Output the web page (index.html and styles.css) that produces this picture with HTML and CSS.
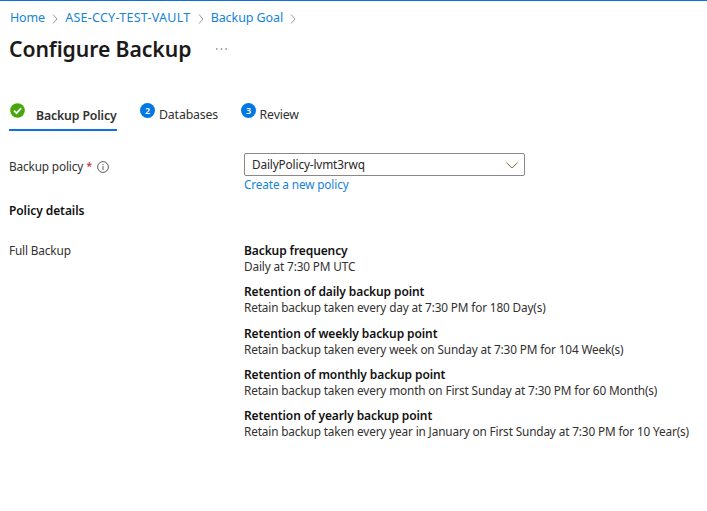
FILE: index.html
```html
<!DOCTYPE html>
<html lang="en">
<head>
<meta charset="utf-8">
<title>Configure Backup</title>
<link rel="stylesheet" href="styles.css">
</head>
<body>
<nav class="crumbs">
<a>Home</a><svg class="sep" viewBox="0 0 6 10"><path d="M1 .5 5 5 1 9.500"/></svg><a class="vault">ASE-CCY-TEST-VAULT</a><svg class="sep" viewBox="0 0 6 10"><path d="M1 .5 5 5 1 9.500"/></svg><a class="goal">Backup Goal</a><svg class="sep" viewBox="0 0 6 10"><path d="M1 .5 5 5 1 9.500"/></svg>
</nav>
<header class="heading"><h1>Configure Backup</h1><svg class="more" viewBox="0 0 11 2"><path d="M0 .5h1.500v1H0zM4.700 .5h1.500v1H4.700zM9.400 .5h1.500v1H9.400z"/></svg></header>
<div class="tabs">
<div class="tab active"><svg class="check" viewBox="0 0 15 15"><circle cx="7.500" cy="7.500" r="7.300"/><path d="m4 7.700 2.500 2.500 4.700-5"/></svg><span>Backup Policy</span></div>
<div class="tab databases"><i class="num">2</i><span>Databases</span></div>
<div class="tab review"><i class="num">3</i><span>Review</span></div>
</div>
<div class="row field">
<div class="label"><span>Backup policy</span><span class="req">*</span><svg class="info" viewBox="0 0 12 12"><circle cx="6" cy="6" r="5.400"/><path d="M6 5v4M6 2.900v1.200"/></svg></div>
<div class="control"><div class="select"><span>DailyPolicy-lvmt3rwq</span><svg class="chev" viewBox="0 0 12 7"><path d="m.5 .7 5.500 5.300L11.500 .7"/></svg></div><a class="create">Create a new policy</a></div>
</div>
<h2>Policy details</h2>
<div class="row details">
<div class="full">Full Backup</div>
<dl>
<dt>Backup frequency</dt><dd>Daily at 7:30 PM UTC</dd>
<dt>Retention of daily backup point</dt><dd>Retain backup taken every day at 7:30 PM for 180 Day(s)</dd>
<dt>Retention of weekly backup point</dt><dd>Retain backup taken every week on Sunday at 7:30 PM for 104 Week(s)</dd>
<dt>Retention of monthly backup point</dt><dd>Retain backup taken every month on First Sunday at 7:30 PM for 60 Month(s)</dd>
<dt>Retention of yearly backup point</dt><dd>Retain backup taken every year in January on First Sunday at 7:30 PM for 10 Year(s)</dd>
</dl>
</div>
</body>
</html>
```
FILE: styles.css
```css
*{box-sizing:border-box}
body{margin:0;height:511px;overflow:hidden;background:#fff;border-top:1px solid #0f70e0;padding:0 9px;color:#323130;font:11.8px/16px "Noto Sans","Open Sans",sans-serif;letter-spacing:-.145px}
a{color:#1683d9}
svg{display:block;flex:none;fill:none;stroke-width:1}
h1,h2,dl,dd{margin:0}
.crumbs{display:flex;align-items:center;height:34px;font-size:12.5px;padding-left:1px}
.vault{letter-spacing:.26px}
.goal{letter-spacing:-.08px}
.sep{width:6px;height:10px;margin:1px 7.1px 0;stroke:#999}
.heading{display:flex;align-items:center;height:28px}
h1{font-size:21.2px;line-height:28px;font-weight:600;color:#1b1a19;letter-spacing:-.08px}
.more{width:11px;height:2px;margin-left:25px;fill:#555}
.tabs{display:flex;height:34px;margin-top:34px;font-size:12.300px}
.tab{display:flex;align-items:flex-start;height:34px;line-height:36px}
.active{width:108px;border-bottom:2px solid #0f70e0;font-weight:600;line-height:38px;white-space:nowrap}
.check{width:15px;height:15px;margin:6px 11px 0 1px;fill:#47a80b}
.check path{fill:none;stroke:#fff;stroke-width:1.700}
.databases,.review{margin-left:23px}
.num{width:15px;height:15px;margin:6px 4px 0 0;border-radius:50%;background:#0078e4;color:#fff;font:600 9px/15px "Noto Sans",sans-serif;text-align:center}
.review .num{margin-right:3.500px}
.row{display:grid;grid-template-columns:235px 1fr}
.field{margin-top:22px}
.label{display:flex;align-items:center;height:28px}
.label span,.select span{padding-bottom:2px}
.label .req{color:#b42832;font-size:11px;margin:0 5px 0 3px}
.info{width:12px;height:12px;stroke:#605e5c}
.select{display:flex;align-items:center;justify-content:space-between;width:281px;height:23px;border:1px solid #8a8886;border-radius:2px;padding:0 6px 0 7px;color:#292827}
.chev{width:12px;height:7px;margin-top:1px;stroke:#8a6a35}
.create{display:block;letter-spacing:-.14px}
h2{font-size:12px;line-height:16px;font-weight:600;color:#111;margin-top:11px;letter-spacing:-.08px}
.details{margin-top:24px}
dt{font-size:12px;font-weight:600;color:#111;margin-top:9.25px;letter-spacing:-.1px}
dt:first-child{margin-top:0}
dd{white-space:nowrap}
dd,.full{line-height:14px;padding-bottom:2px}
```
